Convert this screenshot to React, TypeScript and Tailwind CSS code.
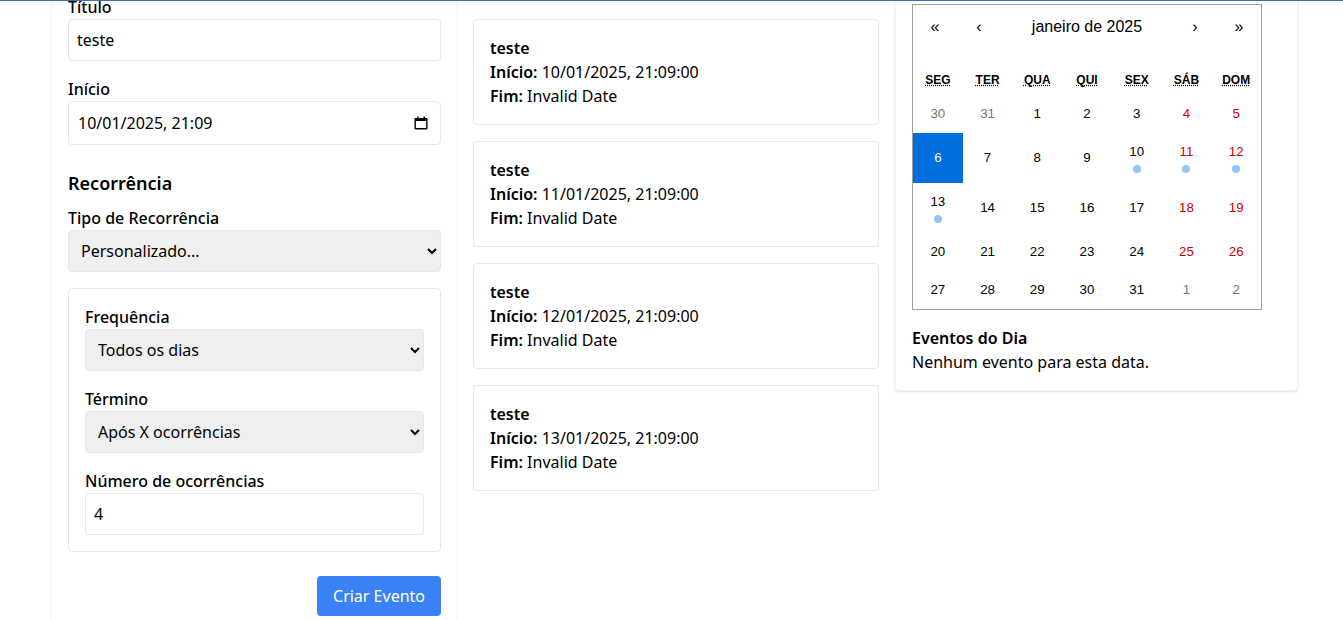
import React from 'react';

const events = ['10/01/2025', '11/01/2025', '12/01/2025', '13/01/2025'];

const weekdays = ['SEG', 'TER', 'QUA', 'QUI', 'SEX', 'SÁB', 'DOM'];

type Day = { n: number; muted?: boolean; dot?: boolean; active?: boolean };

const days: Day[] = [
  { n: 30, muted: true },
  { n: 31, muted: true },
  { n: 1 },
  { n: 2 },
  { n: 3 },
  { n: 4 },
  { n: 5 },
  { n: 6, active: true },
  { n: 7 },
  { n: 8 },
  { n: 9 },
  { n: 10, dot: true },
  { n: 11, dot: true },
  { n: 12, dot: true },
  { n: 13, dot: true },
  { n: 14 },
  { n: 15 },
  { n: 16 },
  { n: 17 },
  { n: 18 },
  { n: 19 },
  { n: 20 },
  { n: 21 },
  { n: 22 },
  { n: 23 },
  { n: 24 },
  { n: 25 },
  { n: 26 },
  { n: 27 },
  { n: 28 },
  { n: 29 },
  { n: 30 },
  { n: 31 },
  { n: 1, muted: true },
  { n: 2, muted: true },
];

function Field({ label, children }: { label: string; children: React.ReactNode }) {
  return (
    <div>
      <label className="block font-medium">{label}</label>
      {children}
    </div>
  );
}

function TextInput({ value }: { value: string }) {
  return (
    <input
      readOnly
      value={value}
      className="block w-full h-[42px] px-2 border border-[#e5e7eb] rounded bg-white outline-none"
    />
  );
}

function Select({ value }: { value: string }) {
  return (
    <select
      defaultValue={value}
      className="block w-full h-[42px] px-2 border border-[#e5e7eb] rounded bg-[#efefef] outline-none"
    >
      <option>{value}</option>
    </select>
  );
}

function CalendarIcon() {
  return (
    <svg width="14" height="14" viewBox="0 0 14 14" className="mr-[4px]">
      <path d="M3 0.5h1.5V2h5V0.5H11V2h1.5a1 1 0 0 1 1 1v9.5a1 1 0 0 1-1 1h-11a1 1 0 0 1-1-1V3a1 1 0 0 1 1-1H3zM1.9 5v7.1h10.2V5z" fill="#000" />
    </svg>
  );
}

function Calendar() {
  return (
    <div className="w-[350px] border border-[#a0a096] bg-white font-['Liberation_Sans',Arial,sans-serif]">
      {/* Navigation */}
      <div className="flex h-[44px] mb-4 items-center text-center">
        <span className="w-[44px]">«</span>
        <span className="w-[44px]">‹</span>
        <span className="flex-1">janeiro de 2025</span>
        <span className="w-[44px]">›</span>
        <span className="w-[44px]">»</span>
      </div>

      <div className="grid grid-cols-7 text-center text-xs font-bold leading-[18px]">
        {weekdays.map((d) => (
          <div key={d} className="p-[6px]">
            <abbr className="underline decoration-dotted">{d}</abbr>
          </div>
        ))}
      </div>

      <div className="grid grid-cols-7 text-center text-[13.33px] leading-[18px]">
        {days.map((d, i) => {
          const weekend = i % 7 >= 5;
          let color = 'text-black';
          if (d.active) color = 'text-white bg-[#006edc]';
          else if (d.muted) color = 'text-[#757575]';
          else if (weekend) color = 'text-[#d10000]';
          return (
            <div key={i} className={`flex flex-col items-center justify-center py-[10px] ${color}`}>
              <span>{d.n}</span>
              {d.dot && <span className="mt-1 w-2 h-2 rounded-full bg-[#93c5fd]" />}
            </div>
          );
        })}
      </div>
    </div>
  );
}

export default function App() {
  return (
    <div className="relative h-[620px] overflow-hidden bg-white text-black font-['Noto_Sans',sans-serif]">
      <div className="absolute top-0 inset-x-0 h-px bg-[#3b6fb5]" />

      <div className="flex items-start -mt-[21px] ml-[51px] w-[1247px]">
        {/* Form */}
        <div className="w-[407px] min-h-[700px] shrink-0 border-x border-[#f3f4f6] p-4 flex flex-col gap-4">
          <Field label="Título">
            <TextInput value="teste" />
          </Field>

          <Field label="Início">
            <div className="flex items-center justify-between h-[44px] pl-[9px] pr-2 border border-[#e5e7eb] rounded">
              <span>10/01/2025, 21:09</span>
              <CalendarIcon />
            </div>
          </Field>

          <h3 className="mt-2 text-lg font-semibold leading-7 -mb-[7px]">Recorrência</h3>

          <Field label="Tipo de Recorrência">
            <Select value="Personalizado..." />
          </Field>

          <div className="border border-[#e5e7eb] rounded p-4 flex flex-col gap-4">
            <Field label="Frequência">
              <Select value="Todos os dias" />
            </Field>
            <Field label="Término">
              <Select value="Após X ocorrências" />
            </Field>
            <Field label="Número de ocorrências">
              <TextInput value="4" />
            </Field>
          </div>

          <div className="flex justify-end mt-2">
            <button className="h-10 px-4 rounded bg-[#3b82f6] text-white">Criar Evento</button>
          </div>
        </div>

        {/* Event list */}
        <div className="w-[437px] shrink-0 pt-10 pl-[15px] pr-4 flex flex-col gap-4">
          {events.map((date) => (
            <div key={date} className="border border-[#e5e7eb] rounded p-4">
              <div className="font-semibold">teste</div>
              <div>
                <strong className="font-semibold">Início:</strong> {date}, 21:09:00
              </div>
              <div>
                <strong className="font-semibold">Fim:</strong> Invalid Date
              </div>
            </div>
          ))}
        </div>

        {/* Calendar card */}
        <div className="w-[403px] shrink-0 rounded bg-white shadow border border-[#f3f4f6] px-4 pt-[24px] pb-4">
          <Calendar />
          <div className="mt-4 font-semibold">Eventos do Dia</div>
          <div>Nenhum evento para esta data.</div>
        </div>
      </div>
    </div>
  );
}
